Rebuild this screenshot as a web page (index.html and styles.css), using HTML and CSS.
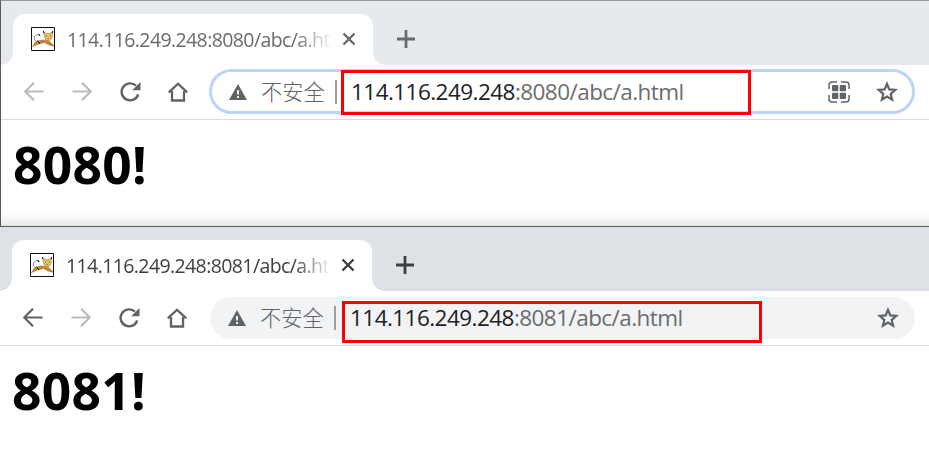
FILE: index.html
```
<!DOCTYPE html>
<html lang="zh-CN">
<head>
<meta charset="utf-8">
<title>8080 / 8081</title>
<link rel="stylesheet" href="styles.css">
</head>
<body>
<svg class="defs" width="0" height="0" aria-hidden="true">
  <symbol id="cat" viewBox="0 0 24 24">
    <path d="M.5.5h23v23H.5z" fill="#fff" stroke="#111"/>
    <path d="M9.500 8.500C7 6.500 3.500 8 3.200 11c-.1 1.500 1 3 2.600 3.300" fill="none" stroke="#777" stroke-width=".8"/>
    <path d="M1.500 19.500 4.500 15l6-2 6.500.500 5 4 1 1.700-5-1.200-4.500-2.500-6 1.500z" fill="#c8892b" stroke="#8a6224" stroke-width=".5"/>
    <path d="m12.500 5 2.800 1.500h3.500l2.700-1.700-.4 5.500-2 3.200-2 .8-2.500-1.600-1.300-3.500z" fill="#e8bd66" stroke="#8d6c34" stroke-width=".5"/>
    <path d="m14.500 8.500 1.500 1M19.700 8.500l-1.200 1M16.500 11.500h1.500" stroke="#6b4d1d" stroke-width=".6" fill="none"/>
    <path d="m12.300 4 .6 2M21.700 4l-.5 2M7.500 7l1.500 2M6.500 13.500l2.500 3.500" stroke="#111"/>
  </symbol>
  <symbol id="close" viewBox="0 0 14 14"><path d="m1.500 1.500 11 11m0-11-11 11" fill="none" stroke="currentColor" stroke-width="2.400"/></symbol>
  <symbol id="plus" viewBox="0 0 18 18"><path d="M9 0v18M0 9h18" fill="none" stroke="currentColor" stroke-width="2.800"/></symbol>
  <symbol id="back" viewBox="0 0 20 20"><path d="M19.500 9.500H1.500M10 .7 1.200 9.500l8.800 8.800" fill="none" stroke="currentColor" stroke-width="2.200"/></symbol>
  <symbol id="forward" viewBox="0 0 20 20"><path d="M.5 9.500h18M10 .7l8.800 8.800-8.800 8.800" fill="none" stroke="currentColor" stroke-width="2.200"/></symbol>
  <symbol id="reload" viewBox="0 0 22 20"><path d="M16 3.700A8.500 8.500 0 1 0 18.200 12.500" fill="none" stroke="currentColor" stroke-width="2.400"/><path d="M20.500 0v8.300h-8.300z" fill="currentColor"/></symbol>
  <symbol id="home" viewBox="0 0 20 20"><path d="M.8 10.300 10 1.700l9.200 8.600M4 9v9.500h12V9" fill="none" stroke="currentColor" stroke-width="2.300"/></symbol>
  <symbol id="warn" viewBox="0 0 18 16"><path d="M9 0l9 16H0z" fill="currentColor"/><path d="M9 6v4.500M9 12v2" stroke="#fff" stroke-width="1.800"/></symbol>
  <symbol id="star" viewBox="0 0 22 22"><path d="m11 2.800 2.300 5.600 6 .5-4.600 3.900 1.400 5.900L11 15.600l-5.100 3.100 1.400-5.900-4.600-3.900 6-.5z" fill="none" stroke="currentColor" stroke-width="2.200"/></symbol>
  <symbol id="qr" viewBox="0 0 22 22"><path d="M1 8V4a3 3 0 0 1 3-3h5M13 1h5a3 3 0 0 1 3 3v4M21 14v4a3 3 0 0 1-3 3h-5M9 21H4a3 3 0 0 1-3-3v-4" fill="none" stroke="currentColor" stroke-width="1.500"/><g fill="currentColor"><rect x="4" y="4" width="6.300" height="6.300" rx="1"/><rect x="11.700" y="4" width="6.300" height="6.300" rx="1"/><rect x="4" y="11.700" width="6.300" height="6.300" rx="1"/><rect x="11.700" y="11.700" width="6.300" height="6.300" rx="1"/></g></symbol>
</svg>

<section class="window window-first">
  <header class="tabs">
    <div class="tab">
      <svg class="favicon"><use href="#cat"/></svg>
      <span class="title">114.116.249.248:8080/abc/a.html</span>
      <svg class="close"><use href="#close"/></svg>
    </div>
    <svg class="plus"><use href="#plus"/></svg>
  </header>
  <nav class="toolbar">
    <svg class="nav-icon disabled"><use href="#back"/></svg>
    <svg class="nav-icon disabled"><use href="#forward"/></svg>
    <svg class="nav-icon reload"><use href="#reload"/></svg>
    <svg class="nav-icon"><use href="#home"/></svg>
    <div class="address focused">
      <svg class="warn"><use href="#warn"/></svg>
      <span class="label">不安全</span>
      <span class="divider"></span>
      <span class="url"><b>114.116.249.248</b>:8080/abc/a.html</span>
      <svg class="qr"><use href="#qr"/></svg>
      <svg class="star"><use href="#star"/></svg>
    </div>
  </nav>
  <main><h1>8080!</h1></main>
  <div class="mark mark-first"></div>
</section>

<section class="window window-second">
  <header class="tabs">
    <div class="tab">
      <svg class="favicon"><use href="#cat"/></svg>
      <span class="title">114.116.249.248:8081/abc/a.html</span>
      <svg class="close"><use href="#close"/></svg>
    </div>
    <svg class="plus"><use href="#plus"/></svg>
  </header>
  <nav class="toolbar">
    <svg class="nav-icon"><use href="#back"/></svg>
    <svg class="nav-icon disabled"><use href="#forward"/></svg>
    <svg class="nav-icon reload"><use href="#reload"/></svg>
    <svg class="nav-icon"><use href="#home"/></svg>
    <div class="address">
      <svg class="warn"><use href="#warn"/></svg>
      <span class="label">不安全</span>
      <span class="divider"></span>
      <span class="url"><b>114.116.249.248</b>:8081/abc/a.html</span>
      <svg class="star"><use href="#star"/></svg>
    </div>
  </nav>
  <main><h1>8081!</h1></main>
  <div class="mark mark-second"></div>
</section>
</body>
</html>
```
FILE: styles.css
```
* { box-sizing: border-box; }
body {
  margin: 0;
  height: 473px;
  overflow: hidden;
  background: #fff;
  font-family: "Open Sans", "Noto Sans CJK SC", sans-serif;
}
svg { display: block; flex: none; }
.defs { position: absolute; }

.window { position: relative; width: 929px; overflow: hidden; }
.window-first {
  --strip: #e7eaed;
  --ink: #686b6f;
  height: 226px;
  border-top: 1px solid #96979b;
  border-left: 1px solid #5a5a5a;
}
.window-second {
  --strip: #dee1e6;
  --ink: #3c4043;
  height: 247px;
  border-top: 1px solid #5c5c5c;
}

.tabs {
  display: flex;
  height: 64px;
  padding: 13px 0 0 12px;
  background:
    radial-gradient(circle at 0 0, var(--strip) 11.5px, #fff 12px) 0 52px / 12px 12px no-repeat,
    radial-gradient(circle at 100% 0, var(--strip) 11.5px, #fff 12px) 372px 52px / 12px 12px no-repeat,
    var(--strip);
}
.tab {
  display: flex;
  width: 360px;
  height: 51px;
  padding: 13px 0 0 18px;
  background: #fff;
  border-radius: 12px 12px 0 0;
}
.favicon { width: 24px; height: 24px; }
.title {
  width: 263px;
  height: 30px;
  margin: -3px 0 0 12px;
  overflow: hidden;
  white-space: nowrap;
  font-size: 19.5px;
  line-height: 31px;
  letter-spacing: -.6px;
  color: var(--ink);
  -webkit-mask-image: linear-gradient(to right, #000 228px, transparent 266px);
  mask-image: linear-gradient(to right, #000 228px, transparent 266px);
}
.close { width: 14px; height: 14px; margin: 5px 0 0 12px; color: var(--ink); }
.plus { width: 18px; height: 18px; margin: 16px 0 0 24px; color: var(--ink); }

.toolbar {
  display: flex;
  align-items: center;
  height: 55px;
  padding: 0 0 1px 23px;
  border-bottom: 1px solid #dadce0;
}
.nav-icon { width: 20px; height: 20px; margin-right: 28px; color: #5f6368; }
.nav-icon.reload { width: 22px; margin-right: 26px; }
.nav-icon.disabled { color: #b9bbbe; }

.address {
  display: flex;
  align-items: center;
  width: 705px;
  height: 42px;
  margin-left: -5px;
  padding: 0 16px 0 18px;
  background: #f1f3f4;
  border-radius: 21px;
  color: #5f6368;
}
.address.focused {
  width: 706px;
  height: 45px;
  margin-left: -7px;
  padding: 0 14px 0 17px;
  background: #fff;
  border: 3px solid #bad5f8;
  border-radius: 23px;
}
.warn { width: 18px; height: 16px; }
.label {
  width: 66px;
  margin: -2px 0 0 14px;
  font-family: "Noto Sans CJK SC", sans-serif;
  font-size: 21.3px;
  font-weight: 300;
  line-height: 30px;
  white-space: nowrap;
}
.divider { width: 2px; height: 24px; margin-left: 8px; background: #9b9da0; }
.url {
  flex: 1;
  margin: 0 0 0 14px;
  font-size: 22.5px;
  line-height: 30px;
  letter-spacing: -.55px;
  white-space: nowrap;
  color: #6a6d70;
}
.url b { font-weight: 400; color: #202124; }
.qr { width: 22px; height: 22px; margin-right: 26px; }
.star { width: 22px; height: 22px; }

main { height: 107px; padding: 8px 0 0 12px; }
.window-first main {
  height: 106px;
  background: linear-gradient(to bottom, #fff 92px, #f5f5f5 100px, #e4e4e4 106px);
}
h1 { margin: 0; font-size: 51.5px; font-weight: 700; line-height: 72px; letter-spacing: .3px; color: #000; }

.mark { position: absolute; border: 3px solid #f00; }
.mark-first { left: 340px; top: 69px; width: 410px; height: 45px; }
.mark-second { left: 342px; top: 74px; width: 420px; height: 42px; }
```
